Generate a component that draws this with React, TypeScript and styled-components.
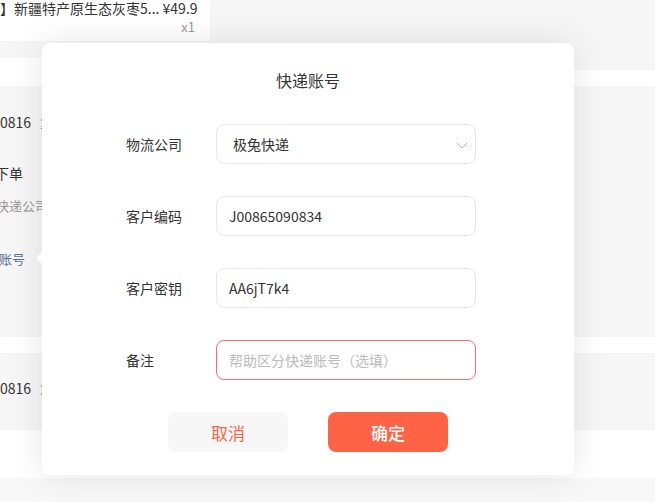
import React from "react";
import styled, { createGlobalStyle } from "styled-components";

const GlobalStyle = createGlobalStyle`
  html, body {
    margin: 0;
    padding: 0;
    background: #ffffff;
  }
  body {
    font-family: "Noto Sans CJK SC", "Noto Sans", sans-serif;
    color: #333;
  }
`;

const Page = styled.div`
  position: relative;
  width: 655px;
  height: 502px;
  overflow: hidden;
  display: flex;
  flex-direction: column;
  background: #fff;
`;

const ProductRow = styled.div`
  display: flex;
  height: 70px;
  background: #f6f6f6;
`;

const ProductInfo = styled.div`
  width: 210px;
  display: flex;
  flex-direction: column;
`;

const ProductText = styled.div`
  height: 43px;
  background: #fff;
  display: flex;
  flex-direction: column;
  margin-top: -2px;
`;

const ProductTitle = styled.div`
  font-size: 14px;
  line-height: 20px;
  color: #333;
  white-space: nowrap;
  padding-right: 14px;
  text-align: right;
`;

const Qty = styled.div`
  font-size: 13px;
  line-height: 18px;
  color: #999;
  text-align: right;
  padding-right: 15px;
`;

const ProductGap = styled.div`
  height: 17px;
`;

const ProductBottom = styled.div`
  flex: 1;
  background: #fff;
`;

const Spacer = styled.div<{ $h: number; $bg?: string }>`
  height: ${(p) => p.$h}px;
  flex-shrink: 0;
  background: ${(p) => p.$bg || "#fff"};
`;

const OrderCard = styled.div<{ $h: number }>`
  height: ${(p) => p.$h}px;
  flex-shrink: 0;
  background: #f6f6f6;
  display: flex;
  flex-direction: column;
`;

const Line = styled.div<{ $color?: string; $size?: number; $top: number; $shift?: number }>`
  margin-top: ${(p) => p.$top}px;
  margin-left: ${(p) => p.$shift || 0}px;
  font-size: ${(p) => p.$size || 14}px;
  line-height: 20px;
  color: ${(p) => p.$color || "#333"};
  white-space: nowrap;
`;

const OrderNo = styled.span`
  margin-right: 9px;
`;

const CopyTag = styled.span`
  font-size: 12px;
  color: #999;
`;

const Modal = styled.div`
  position: absolute;
  left: 42px;
  top: 43px;
  width: 532px;
  height: 432px;
  box-sizing: border-box;
  background: #fff;
  border-radius: 8px;
  box-shadow: 0 0 36px rgba(0, 0, 0, 0.1);
  display: flex;
  flex-direction: column;
  padding-top: 26px;
`;

const Arrow = styled.div`
  position: absolute;
  left: -6px;
  top: 209px;
  width: 0;
  height: 0;
  border-top: 6px solid transparent;
  border-bottom: 6px solid transparent;
  border-right: 6px solid #fff;
`;

const Title = styled.div`
  font-size: 16px;
  line-height: 22px;
  color: #333;
  text-align: center;
`;

const Form = styled.div`
  margin-top: 33px;
  padding-left: 84px;
  display: flex;
  flex-direction: column;
  gap: 32px;
`;

const Row = styled.div`
  display: flex;
  align-items: center;
  height: 40px;
`;

const Label = styled.div`
  width: 90px;
  font-size: 14px;
  color: #333;
`;

const Field = styled.div<{ $error?: boolean; $pad?: number }>`
  position: relative;
  width: 260px;
  height: 40px;
  box-sizing: border-box;
  border: 1px solid ${(p) => (p.$error ? "#fb6b6b" : "#e6e6e6")};
  border-radius: 8px;
  display: flex;
  align-items: center;
  padding: 0 ${(p) => p.$pad ?? 12}px;
  font-size: 14px;
  color: #333;
`;

const Placeholder = styled.span`
  color: #bbb;
`;

const Chevron = styled.svg`
  position: absolute;
  right: 7px;
  top: 17px;
`;

const Footer = styled.div`
  margin-top: 32px;
  display: flex;
  justify-content: center;
  gap: 40px;
`;

const Button = styled.div<{ $primary?: boolean }>`
  width: 120px;
  height: 40px;
  border-radius: 8px;
  display: flex;
  align-items: center;
  justify-content: center;
  font-size: 17px;
  background: ${(p) => (p.$primary ? "#ff6346" : "#f7f7f7")};
  color: ${(p) => (p.$primary ? "#fff" : "#ff6346")};
  font-weight: ${(p) => (p.$primary ? 500 : 400)};
`;

export default function App() {
  return (
    <>
      <GlobalStyle />
      <Page>
        <ProductRow>
          <ProductInfo>
            <ProductText>
              <ProductTitle>】新疆特产原生态灰枣5... ¥49.9</ProductTitle>
              <Qty>x1</Qty>
            </ProductText>
            <ProductGap />
            <ProductBottom />
          </ProductInfo>
        </ProductRow>
        <Spacer $h={16} />
        <OrderCard $h={251}>
          <Line $top={26}>
            <OrderNo>0816</OrderNo>
            <CopyTag>复制</CopyTag>
          </Line>
          <Line $top={30} $shift={-5}>下单</Line>
          <Line $top={13} $size={13} $color="#999" $shift={-4}>快递公司</Line>
          <Line $top={33} $size={13} $color="#5b6fa0" $shift={-1}>账号</Line>
        </OrderCard>
        <Spacer $h={16} />
        <OrderCard $h={77}>
          <Line $top={25}>
            <OrderNo>0816</OrderNo>
            <CopyTag>复制</CopyTag>
          </Line>
        </OrderCard>
        <Spacer $h={48} />
        <Spacer $h={24} $bg="#f8f8f8" />

        <Modal>
          <Arrow />
          <Title>快递账号</Title>
          <Form>
            <Row>
              <Label>物流公司</Label>
              <Field $pad={16}>
                极兔快递
                <Chevron width="12" height="7" viewBox="0 0 12 7">
                  <path d="M1 1l5 5 5-5" fill="none" stroke="#bdbdbd" strokeWidth="1" />
                </Chevron>
              </Field>
            </Row>
            <Row>
              <Label>客户编码</Label>
              <Field>J00865090834</Field>
            </Row>
            <Row>
              <Label>客户密钥</Label>
              <Field>AA6jT7k4</Field>
            </Row>
            <Row>
              <Label>备注</Label>
              <Field $error>
                <Placeholder>帮助区分快递账号（选填）</Placeholder>
              </Field>
            </Row>
          </Form>
          <Footer>
            <Button>取消</Button>
            <Button $primary>确定</Button>
          </Footer>
        </Modal>
      </Page>
    </>
  );
}
